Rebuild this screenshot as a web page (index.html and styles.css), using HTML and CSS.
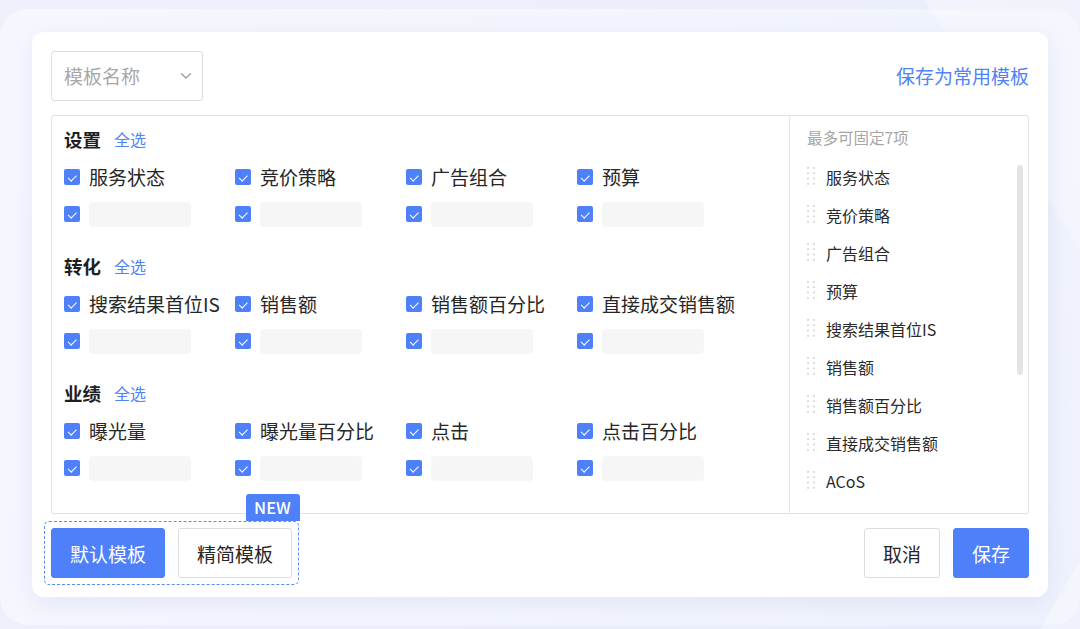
FILE: index.html
```html
<!DOCTYPE html>
<html lang="zh-CN">
<head>
<meta charset="utf-8">
<title>自定义列</title>
<link rel="stylesheet" href="styles.css">
</head>
<body>
<div class="page">
  <div class="card">
    <div class="toolbar">
      <div class="select">
        <span class="select-placeholder">模板名称</span>
        <svg class="chevron" width="12" height="8" viewBox="0 0 12 8"><path d="M1.5 1.8 L6 6 L10.5 1.8" fill="none" stroke="#a0a0a0" stroke-width="1.4" stroke-linecap="round" stroke-linejoin="round"/></svg>
      </div>
      <a class="link">保存为常用模板</a>
    </div>

    <div class="panel">
      <div class="fields">
        <section class="group">
          <div class="group-head"><span class="group-title">设置</span><span class="select-all">全选</span></div>
          <div class="grid">
            <div class="item"><span class="cb"></span><span class="label">服务状态</span></div>
            <div class="item"><span class="cb"></span><span class="label">竞价策略</span></div>
            <div class="item"><span class="cb"></span><span class="label">广告组合</span></div>
            <div class="item"><span class="cb"></span><span class="label">预算</span></div>
            <div class="item"><span class="cb"></span><span class="blank"></span></div>
            <div class="item"><span class="cb"></span><span class="blank"></span></div>
            <div class="item"><span class="cb"></span><span class="blank"></span></div>
            <div class="item"><span class="cb"></span><span class="blank"></span></div>
          </div>
        </section>
        <section class="group">
          <div class="group-head"><span class="group-title">转化</span><span class="select-all">全选</span></div>
          <div class="grid">
            <div class="item"><span class="cb"></span><span class="label">搜索结果首位IS</span></div>
            <div class="item"><span class="cb"></span><span class="label">销售额</span></div>
            <div class="item"><span class="cb"></span><span class="label">销售额百分比</span></div>
            <div class="item"><span class="cb"></span><span class="label">直接成交销售额</span></div>
            <div class="item"><span class="cb"></span><span class="blank"></span></div>
            <div class="item"><span class="cb"></span><span class="blank"></span></div>
            <div class="item"><span class="cb"></span><span class="blank"></span></div>
            <div class="item"><span class="cb"></span><span class="blank"></span></div>
          </div>
        </section>
        <section class="group">
          <div class="group-head"><span class="group-title">业绩</span><span class="select-all">全选</span></div>
          <div class="grid">
            <div class="item"><span class="cb"></span><span class="label">曝光量</span></div>
            <div class="item"><span class="cb"></span><span class="label">曝光量百分比</span></div>
            <div class="item"><span class="cb"></span><span class="label">点击</span></div>
            <div class="item"><span class="cb"></span><span class="label">点击百分比</span></div>
            <div class="item"><span class="cb"></span><span class="blank"></span></div>
            <div class="item"><span class="cb"></span><span class="blank"></span></div>
            <div class="item"><span class="cb"></span><span class="blank"></span></div>
            <div class="item"><span class="cb"></span><span class="blank"></span></div>
          </div>
        </section>
      </div>

      <div class="pinned">
        <div class="pinned-head">最多可固定7项</div>
        <ul class="pinned-list">
          <li><span class="handle"></span>服务状态</li>
          <li><span class="handle"></span>竞价策略</li>
          <li><span class="handle"></span>广告组合</li>
          <li><span class="handle"></span>预算</li>
          <li><span class="handle"></span>搜索结果首位IS</li>
          <li><span class="handle"></span>销售额</li>
          <li><span class="handle"></span>销售额百分比</li>
          <li><span class="handle"></span>直接成交销售额</li>
          <li><span class="handle"></span>ACoS</li>
        </ul>
        <div class="scroll-thumb"></div>
      </div>
    </div>

    <div class="footer">
      <div class="tpl-group">
        <span class="badge">NEW</span>
        <button class="btn btn-primary btn-wide">默认模板</button>
        <button class="btn btn-wide">精简模板</button>
      </div>
      <div class="actions">
        <button class="btn btn-narrow">取消</button>
        <button class="btn btn-primary btn-narrow">保存</button>
      </div>
    </div>
  </div>
</div>
</body>
</html>
```

FILE: styles.css
```css
* { box-sizing: border-box; }

html, body {
  margin: 0;
  padding: 0;
  width: 1080px;
  height: 629px;
  overflow: hidden;
}

body {
  font-family: "Noto Sans CJK SC", "Noto Sans", "Liberation Sans", sans-serif;
  color: #262626;
  background: linear-gradient(120deg, #eef1fc 0%, #eceffb 60%, #e9edfb 100%);
}

.page {
  position: relative;
  width: 1080px;
  height: 629px;
  padding: 32px;
  overflow: hidden;
}

.page::before {
  content: "";
  position: absolute;
  left: 0;
  top: 9px;
  width: 1080px;
  height: 616px;
  border-radius: 28px;
  background: linear-gradient(115deg, #f6f7fe 0%, #f3f5fd 55%, #eff2fc 100%);
  z-index: 0;
}

.page::after {
  content: "";
  position: absolute;
  left: 0;
  top: 0;
  width: 1080px;
  height: 629px;
  background: rgba(255, 255, 255, 0.3);
  clip-path: polygon(925px 0, 1080px 0, 1080px 629px, 1040px 629px, 1080px 560px, 1080px 250px);
  z-index: 0;
}

.card {
  position: relative;
  z-index: 1;
  width: 1016px;
  height: 565px;
  background: #fff;
  border-radius: 12px;
  padding: 19px;
  box-shadow: 0 6px 24px rgba(110, 124, 200, 0.12);
  display: flex;
  flex-direction: column;
}

/* toolbar */
.toolbar {
  display: flex;
  align-items: center;
  justify-content: space-between;
  height: 50px;
}

.select {
  width: 152px;
  height: 50px;
  border: 1px solid #dedede;
  border-radius: 3px;
  display: flex;
  align-items: center;
  justify-content: space-between;
  padding: 0 10px 0 12px;
}

.select-placeholder {
  font-size: 19px;
  line-height: 24px;
  color: #a8a8a8;
}

.chevron { display: block; }

.link {
  font-size: 19px;
  line-height: 24px;
  color: #4f83f7;
  cursor: pointer;
}

/* panel */
.panel {
  margin-top: 14px;
  height: 399px;
  border: 1px solid #e1e1e1;
  border-radius: 3px;
  display: flex;
}

.fields {
  flex: 1;
  padding: 11px 12px 0 12px;
}

.group { margin-bottom: 27px; }

.group-head {
  display: flex;
  align-items: center;
  gap: 13px;
  height: 24px;
  margin-bottom: 13px;
}

.group-title {
  font-size: 18.5px;
  font-weight: 700;
  line-height: 24px;
  color: #1f1f1f;
}

.select-all {
  font-size: 16px;
  line-height: 24px;
  color: #4f83f7;
}

.grid {
  display: grid;
  grid-template-columns: repeat(4, 171px);
  grid-auto-rows: 26px;
  row-gap: 11px;
}

.item {
  display: flex;
  align-items: center;
  gap: 9px;
}

.cb {
  position: relative;
  flex: none;
  width: 16px;
  height: 16px;
  border-radius: 2px;
  background: #4d80f9;
}

.cb::after {
  content: "";
  position: absolute;
  left: 5.5px;
  top: 3.6px;
  width: 3.5px;
  height: 6.5px;
  border: solid #fff;
  border-width: 0 1.6px 1.6px 0;
  transform: rotate(45deg);
}

.label {
  font-size: 19px;
  line-height: 26px;
  color: #262626;
  white-space: nowrap;
}

.blank {
  width: 102px;
  height: 25px;
  border-radius: 4px;
  background: #f6f6f6;
}

/* pinned column */
.pinned {
  position: relative;
  width: 239px;
  border-left: 1px solid #e6e6e6;
  padding: 9px 0 0 17px;
  overflow: hidden;
}

.pinned-head {
  font-size: 15.5px;
  line-height: 24px;
  color: #a6a6a6;
  margin-bottom: 9px;
}

.pinned-list {
  list-style: none;
  margin: 0;
  padding: 0;
}

.pinned-list li {
  display: flex;
  align-items: center;
  gap: 11px;
  height: 38px;
  font-size: 16px;
  color: #2a2a2a;
}

.handle {
  flex: none;
  width: 8px;
  height: 20px;
  background-image: radial-gradient(circle at 1px 1px, #d9d9d9 1px, transparent 1.1px);
  background-size: 6px 5.3px;
  background-repeat: repeat;
}

.scroll-thumb {
  position: absolute;
  right: 5px;
  top: 49px;
  width: 6px;
  height: 210px;
  border-radius: 3px;
  background: #e4e4e4;
}

/* footer */
.footer {
  margin-top: 14px;
  display: flex;
  align-items: center;
  justify-content: space-between;
}

.tpl-group {
  position: relative;
  margin: -7px 0 -7px -7px;
  padding: 6px;
  border: 1.5px dashed #5a8cf8;
  border-radius: 5px;
  display: flex;
  gap: 13px;
}

.badge {
  position: absolute;
  right: -1.5px;
  top: -28px;
  width: 54px;
  height: 27px;
  border-radius: 3px 3px 0 0;
  background: #4d80f9;
  color: #fff;
  font-size: 16.5px;
  font-weight: 500;
  line-height: 27px;
  text-align: center;
}

.actions {
  display: flex;
  gap: 13px;
}

.btn {
  height: 50px;
  padding: 0;
  border: 1px solid #dcdcdc;
  border-radius: 3px;
  background: #fff;
  color: #262626;
  font-family: "Noto Sans CJK SC", "Noto Sans", sans-serif;
  font-size: 19px;
  cursor: pointer;
}

.btn-primary {
  background: #4d80f9;
  border-color: #4d80f9;
  color: #fff;
}

.btn-wide { width: 114px; }
.btn-narrow { width: 76px; }
```
